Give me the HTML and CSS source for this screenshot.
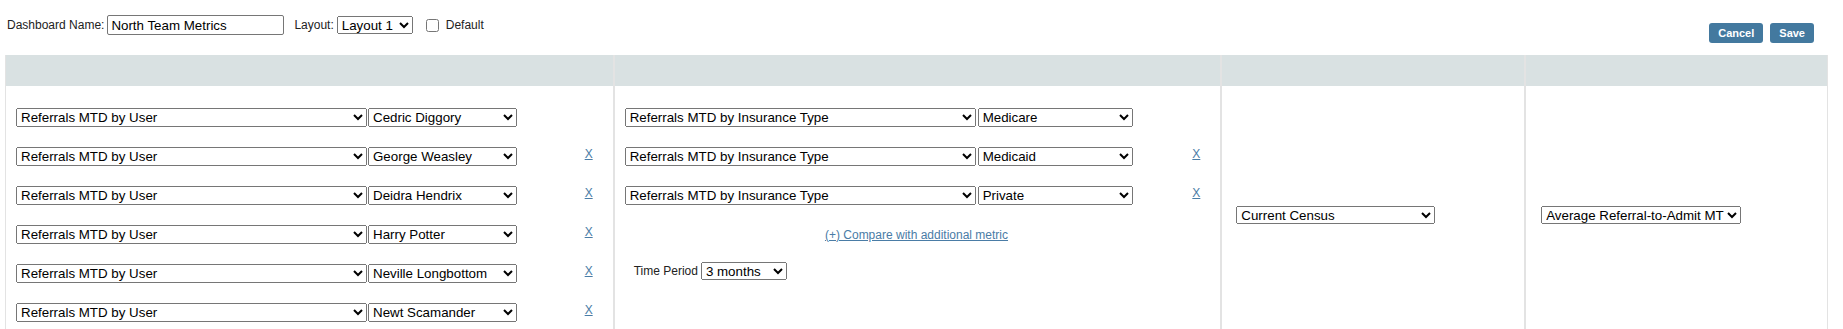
FILE: index.html
```html
<!DOCTYPE html>
<html lang="en">
<head>
    <meta charset="UTF-8">
    <title>Dashboard Setup</title>
    <link rel="stylesheet" href="styles.css">
</head>
<body>
    <!-- Toolbar -->
    <div class="toolbar">
        <div class="dash-fields">
            <label class="field-label">Dashboard Name:</label>
            <input type="text" class="dash-name" value="North Team Metrics">
            <label class="field-label layout-label">Layout:</label>
            <select class="layout-select">
                <option>Layout 1</option>
                <option>Layout 2</option>
            </select>
            <label class="default-check"><input type="checkbox"> Default</label>
        </div>
        <div class="actions">
            <button class="btn">Cancel</button>
            <button class="btn">Save</button>
        </div>
    </div>

    <!-- Dashboard columns -->
    <div class="board">
        <div class="col-head first"></div>
        <div class="col-head"></div>
        <div class="col-head"></div>
        <div class="col-head last"></div>

        <div class="col-body first">
            <div class="metric-row">
                <select class="metric"><option>Referrals MTD by User</option></select>
                <select class="value"><option>Cedric Diggory</option></select>
            </div>
            <div class="metric-row">
                <select class="metric"><option>Referrals MTD by User</option></select>
                <select class="value"><option>George Weasley</option></select>
                <a href="#" class="remove">X</a>
            </div>
            <div class="metric-row">
                <select class="metric"><option>Referrals MTD by User</option></select>
                <select class="value"><option>Deidra Hendrix</option></select>
                <a href="#" class="remove">X</a>
            </div>
            <div class="metric-row">
                <select class="metric"><option>Referrals MTD by User</option></select>
                <select class="value"><option>Harry Potter</option></select>
                <a href="#" class="remove">X</a>
            </div>
            <div class="metric-row">
                <select class="metric"><option>Referrals MTD by User</option></select>
                <select class="value"><option>Neville Longbottom</option></select>
                <a href="#" class="remove">X</a>
            </div>
            <div class="metric-row">
                <select class="metric"><option>Referrals MTD by User</option></select>
                <select class="value"><option>Newt Scamander</option></select>
                <a href="#" class="remove">X</a>
            </div>
        </div>

        <div class="col-body">
            <div class="metric-row">
                <select class="metric"><option>Referrals MTD by Insurance Type</option></select>
                <select class="value wide"><option>Medicare</option></select>
            </div>
            <div class="metric-row">
                <select class="metric"><option>Referrals MTD by Insurance Type</option></select>
                <select class="value wide"><option>Medicaid</option></select>
                <a href="#" class="remove">X</a>
            </div>
            <div class="metric-row">
                <select class="metric"><option>Referrals MTD by Insurance Type</option></select>
                <select class="value wide"><option>Private</option></select>
                <a href="#" class="remove">X</a>
            </div>
            <div class="metric-row add-metric">
                <a href="#">(+) Compare with additional metric</a>
            </div>
            <div class="metric-row time-row">
                <span class="field-label">Time Period</span>
                <select class="time-select">
                    <option>3 months</option>
                    <option>6 months</option>
                </select>
            </div>
        </div>

        <div class="col-body single">
            <select class="single-select"><option>Current Census</option></select>
        </div>

        <div class="col-body single last">
            <select class="single-select avg"><option>Average Referral-to-Admit MTD</option></select>
        </div>
    </div>
</body>
</html>
```

FILE: styles.css
```css
/* General */
body {
    margin: 0;
    font-family: "Liberation Sans", Arial, sans-serif;
    font-size: 12px;
    color: #222;
    background: #fff;
}

select,
input[type="text"] {
    font-family: "Liberation Sans", Arial, sans-serif;
    font-size: 13.33px;
    color: #000;
}

/* Toolbar */
.toolbar {
    display: flex;
    justify-content: space-between;
    align-items: flex-start;
    height: 55px;
    padding: 0 29px 0 7px;
}

.dash-fields {
    display: flex;
    align-items: center;
    padding-top: 15px;
}

.field-label {
    font-size: 12px;
    color: #222;
}

.dash-name {
    box-sizing: border-box;
    width: 177px;
    height: 20px;
    margin: 0 0 0 3px;
    padding: 0 3px;
    border: 1px solid #767676;
    border-radius: 2px;
}

.layout-label {
    margin-left: 10px;
}

.layout-select {
    width: 76px;
    height: 18px;
    margin-left: 3px;
}

.default-check {
    display: flex;
    align-items: center;
    margin-left: 10px;
    font-size: 12px;
}

.default-check input {
    width: 13px;
    height: 13px;
    margin: 0 7px 0 3px;
}

.actions {
    display: flex;
    gap: 7px;
    margin-top: 23px;
}

.btn {
    height: 20px;
    padding: 0 9px;
    border: none;
    border-radius: 3px;
    background-color: #43799f;
    color: #fff;
    font-family: "Liberation Sans", Arial, sans-serif;
    font-size: 11px;
    font-weight: bold;
    cursor: pointer;
}

/* Board */
.board {
    display: grid;
    grid-template-columns: 2fr 2fr 1fr 1fr;
    margin: 0 15px 0 5px;
}

.col-head,
.col-body {
    box-sizing: border-box;
    border-left: 2px solid #e3e3e3;
}

.col-head.first,
.col-body.first {
    border-left-width: 1px;
}

.col-head.last,
.col-body.last {
    border-right: 1px solid #e3e3e3;
}

.col-head {
    height: 31px;
    background: #d9e1e2;
}

.col-body {
    display: flex;
    flex-direction: column;
    gap: 20px;
    padding: 22px 20px 14px 10px;
}

.col-body.single {
    flex-direction: row;
    align-items: center;
    padding-left: 14px;
}

.col-body.single.last {
    padding-left: 15px;
}

.metric-row {
    display: flex;
    align-items: flex-start;
    height: 19px;
}

.metric {
    width: 351px;
    height: 19px;
    margin-right: 1px;
}

.value {
    width: 149px;
    height: 19px;
}

.value.wide {
    width: 155px;
    margin-left: 1px;
}

.remove {
    margin-left: auto;
    width: 8px;
    font-size: 12px;
    line-height: 14px;
    color: #4a7ca6;
}

.add-metric {
    justify-content: center;
    align-items: center;
    padding-left: 8px;
}

.add-metric a {
    font-size: 12px;
    color: #4a7ca6;
}

.time-row {
    align-items: center;
    margin-top: -3px;
    padding-left: 9px;
}

.time-select {
    width: 86px;
    height: 18px;
    margin-left: 3px;
}

.single-select {
    width: 199px;
    height: 18px;
}

.single-select.avg {
    width: 200px;
}
```
